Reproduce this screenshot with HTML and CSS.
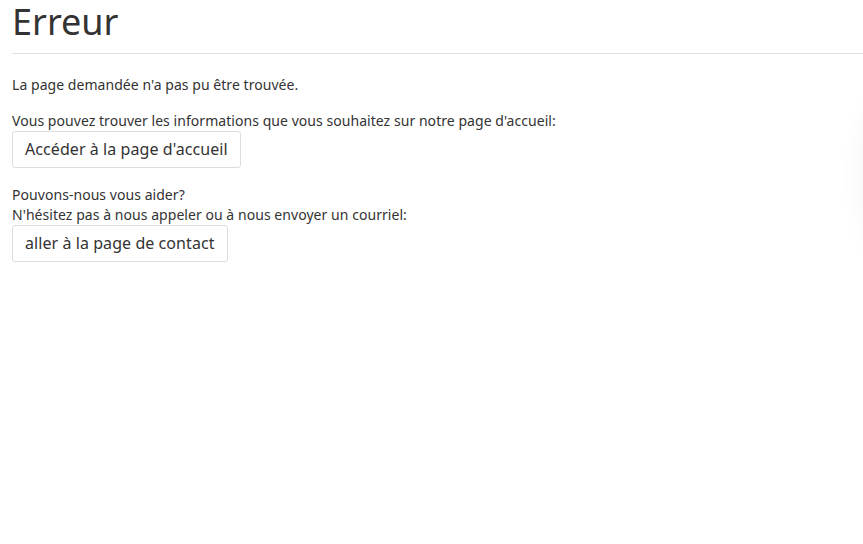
FILE: index.html
```html
<!DOCTYPE html>
<html lang="fr">
<head>
<meta charset="utf-8">
<title>Erreur</title>
<link rel="stylesheet" href="styles.css">
</head>
<body>
<div class="page">
  <h1 class="title">Erreur</h1>
  <p class="msg">La page demandée n'a pas pu être trouvée.</p>
  <div class="block">
    <p class="line">Vous pouvez trouver les informations que vous souhaitez sur notre page d'accueil:</p>
    <a class="btn" href="#">Accéder à la page d'accueil</a>
  </div>
  <div class="block block-second">
    <p class="line">Pouvons-nous vous aider?</p>
    <p class="line">N'hésitez pas à nous appeler ou à nous envoyer un courriel:</p>
    <a class="btn" href="#">aller à la page de contact</a>
  </div>
</div>
<div class="edge-shadow"></div>
</body>
</html>
```

FILE: styles.css
```css
html, body {
  margin: 0;
  padding: 0;
  background: #fff;
  overflow: hidden;
}
body {
  font-family: "Noto Sans", "Open Sans", sans-serif;
  color: #333;
  font-size: 14px;
  line-height: 20px;
  letter-spacing: 0.05px;
}
.page {
  padding: 0 0 0 12px;
}
.title {
  margin: 0;
  font-size: 36px;
  font-weight: 400;
  line-height: 44px;
  letter-spacing: 0;
  padding-bottom: 9px;
  border-bottom: 1px solid #e0e0e0;
}
.msg {
  margin: 21px 0 0;
}
.block {
  margin-top: 16px;
  display: flex;
  flex-direction: column;
  align-items: flex-start;
}
.block-second {
  margin-top: 17px;
}
.line {
  margin: 0;
}
.btn {
  display: inline-block;
  border: 1px solid #ddd;
  border-radius: 3px;
  padding: 6px 12px;
  font-size: 16px;
  line-height: 23px;
  letter-spacing: 0.07px;
  color: #333;
  text-decoration: none;
  background: #fff;
}
.edge-shadow {
  position: absolute;
  right: -40px;
  top: 100px;
  width: 40px;
  height: 150px;
  border-radius: 50%;
  box-shadow: 0 0 24px 4px rgba(0,0,0,0.04);
}
```
